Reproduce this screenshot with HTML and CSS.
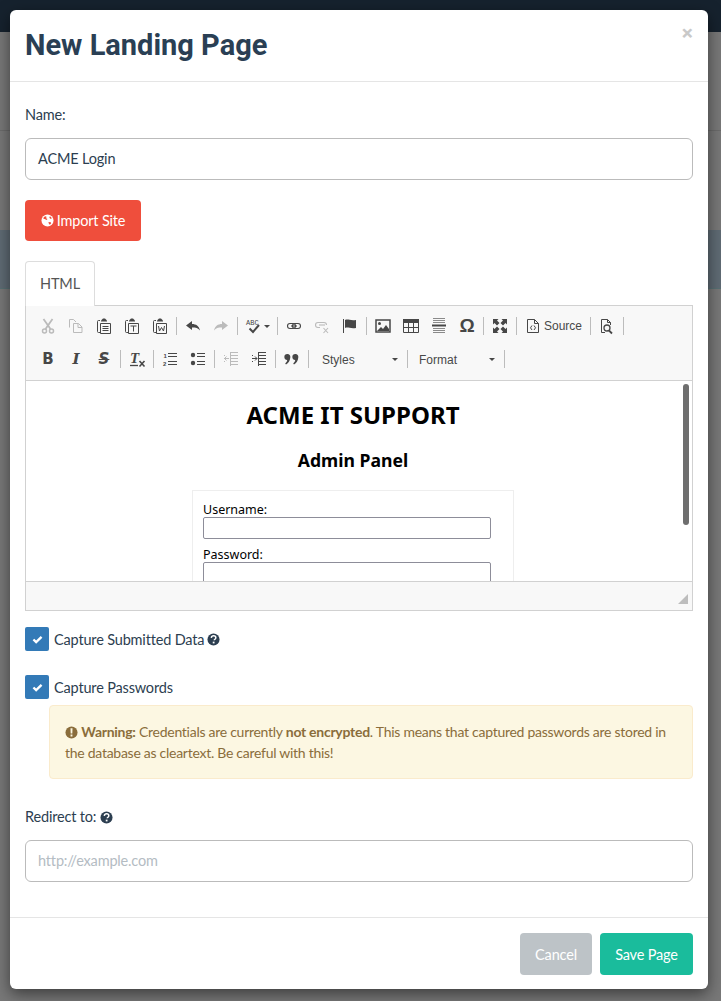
FILE: index.html
```html
<!DOCTYPE html>
<html lang="en">
<head>
<meta charset="utf-8">
<title>New Landing Page</title>
<link rel="stylesheet" href="styles.css">
</head>
<body>
<div class="page">
  <div class="nav"></div>
  <div class="rule"></div>
  <div class="band"></div>
</div>
<div class="modal">
  <header class="modal-header">
    <h4 class="modal-title">New Landing Page</h4>
    <span class="close">×</span>
  </header>
  <main class="modal-body">
    <label class="label">Name:</label>
    <div class="input">ACME Login</div>
    <button class="btn btn-danger"><svg class="fa" viewBox="0 0 14 14"><circle cx="7" cy="7" r="6.5" fill="#fff"/><path d="M3 3.500l1.500-1 1.500.5-.5 1.500L7 5.500 6 6.500 4 5.500 2.500 5zM8 8.500l2.500.5 .5 1-1.500 1.500-1-1zM9.500 2.500l1.500 1 .5 1.500-1.500 0-1-1z" fill="#ef4e3c"/></svg> Import Site</button>
    <div class="tabs"><span class="tab">HTML</span></div>
    <section class="editor">
      <div class="toolbar">
        <div class="row">
          <span class="b off"><svg class="ic" viewBox="0 0 16 16"><g fill="none" stroke="currentColor"><circle cx="4.500" cy="13" r="2" stroke-width="1.500"/><circle cx="11.500" cy="13" r="2" stroke-width="1.500"/><path d="M3.500 1l7 10M12.500 1l-7 10" stroke-width="1.800"/></g></svg></span>
          <span class="b off"><svg class="ic" viewBox="0 0 16 16"><path d="M1.500 9.500v-8h4l2.500 2.500M5.500 5.500h5l3.500 3.500v5.500h-8.500zM10 5.500v4h4" fill="none" stroke="currentColor"/></svg></span>
          <span class="b"><svg class="ic" viewBox="0 0 16 16"><path d="M4 2.500H2.500q-1 0-1 1v10q0 1 1 1H4" fill="none" stroke="currentColor"/><path d="M5 2.500l1-1 1-1h2l1 1 1 1v1H5z" fill="currentColor"/><path d="M4.500 5.500h10v10h-10z" fill="none" stroke="currentColor"/><path d="M6.500 8.500h6M6.500 10.500h6M6.500 12.500h6" stroke="currentColor"/></svg></span>
          <span class="b"><svg class="ic" viewBox="0 0 16 16"><path d="M4 2.500H2.500q-1 0-1 1v10q0 1 1 1H4" fill="none" stroke="currentColor"/><path d="M5 2.500l1-1 1-1h2l1 1 1 1v1H5z" fill="currentColor"/><path d="M4.500 5.500h10v10h-10z" fill="none" stroke="currentColor"/><path d="M6.500 8h6M9.500 8v5.500" stroke="currentColor"/></svg></span>
          <span class="b"><svg class="ic" viewBox="0 0 16 16"><path d="M4 2.500H2.500q-1 0-1 1v10q0 1 1 1H4" fill="none" stroke="currentColor"/><path d="M5 2.500l1-1 1-1h2l1 1 1 1v1H5z" fill="currentColor"/><path d="M4.500 5.500h10v10h-10z" fill="none" stroke="currentColor"/><path d="M6.500 8l1 5 2-3.500 2 3.500 1-5" fill="none" stroke="currentColor"/></svg></span>
          <i class="sep"></i>
          <span class="b"><svg class="ic" viewBox="0 0 16 16"><path d="M1 7.500L7 3v3c4 0 7 2 8 6.500C13 10 11 9.500 7 9.500V12z" fill="currentColor"/></svg></span>
          <span class="b off"><svg class="ic" viewBox="0 0 16 16"><path d="M15 7.500L9 3v3c-4 0-7 2-8 6.500C3 10 5 9.500 9 9.500V12z" fill="currentColor"/></svg></span>
          <i class="sep"></i>
          <span class="b wide"><svg class="ic" viewBox="0 0 16 16"><text class="spell" x="0" y="7">ABC</text><path d="M3.500 10.500l3.500 3.500 6-7" fill="none" stroke="currentColor" stroke-width="2"/></svg><i class="caret"></i></span>
          <i class="sep"></i>
          <span class="b"><svg class="ic" viewBox="0 0 16 16"><g fill="none" stroke="currentColor" stroke-width="1.100"><rect x="1.500" y="5.500" width="8" height="5" rx="2.500"/><rect x="6.500" y="5.500" width="8" height="5" rx="2.500"/><path d="M5 8h6"/></g></svg></span>
          <span class="b off"><svg class="ic" viewBox="0 0 16 16"><g fill="none" stroke="currentColor" stroke-width="1.100"><path d="M6 9.500H4a2.500 2.500 0 010-5h6a2.500 2.500 0 012.500 2.500"/><path d="M5 7h6"/><path d="M9.500 10l4.500 5M14 10l-4.500 5"/></g></svg></span>
          <span class="b"><svg class="ic" viewBox="0 0 16 16"><path d="M1.500 1v14" stroke="currentColor"/><path d="M3 2c3-1.500 5 1 11 0v8c-6 1-8-1.500-11 0z" fill="currentColor"/></svg></span>
          <i class="sep"></i>
          <span class="b"><svg class="ic" viewBox="0 0 16 16"><rect x="1" y="2" width="14" height="12" fill="none" stroke="currentColor" stroke-width="1.500"/><circle cx="4.500" cy="5.500" r="1.500" fill="currentColor"/><path d="M2 13l4-4 2 2 3-4 3 4v2z" fill="currentColor"/></svg></span>
          <span class="b"><svg class="ic" viewBox="0 0 16 16"><path d="M0 1h16v4H0z" fill="currentColor"/><path d="M.5 4v10.500h15V4M0 9.500h16M5.500 4v10.500M10.500 4v10.500" fill="none" stroke="currentColor"/></svg></span>
          <span class="b"><svg class="ic" viewBox="0 0 16 16"><path d="M2 .5h12M2 2.500h12M2 4.500h12M2 10.500h12M2 12.500h12M2 14.500h12" stroke="#8a8a8a"/><path d="M1 7.500h14" stroke="currentColor" stroke-width="2"/></svg></span>
          <span class="b"><span class="omega">Ω</span></span>
          <i class="sep"></i>
          <span class="b"><svg class="ic" viewBox="0 0 16 16"><path d="M1 1h5.500L5 2.500 7.500 5 5 7.500 2.500 5 1 6.500zM15 1v5.500L13.500 5 11 7.500 8.500 5 11 2.500 9.500 1zM1 15V9.500L2.500 11 5 8.500 7.500 11 5 13.500 6.500 15zM15 15H9.500l1.500-1.500L8.500 11 11 8.500l2.500 2.500L15 9.500z" fill="currentColor"/></svg></span>
          <i class="sep"></i>
          <span class="b src"><svg class="ic" viewBox="0 0 16 16"><path d="M2.500 1.500h7l4 4v9h-11zM9.500 1.500v4h4" fill="none" stroke="currentColor"/><path d="M7 7.500L5.500 9.800 7 12M9 7.500l1.500 2.300L9 12" fill="none" stroke="currentColor"/></svg><span class="cmd">Source</span></span>
          <i class="sep"></i>
          <span class="b"><svg class="ic" viewBox="0 0 16 16"><path d="M6 14.500H2.500v-13h6l3 3V7M8.500 1.500V4.500h3" fill="none" stroke="currentColor"/><circle cx="8" cy="10" r="3" fill="none" stroke="currentColor" stroke-width="1.300"/><path d="M10 12.500l3 3" stroke="currentColor" stroke-width="1.800"/></svg></span>
          <i class="sep"></i>
        </div>
        <div class="row">
          <span class="b"><span class="g-b">B</span></span>
          <span class="b"><span class="g-i">I</span></span>
          <span class="b"><span class="g-s">S</span></span>
          <i class="sep"></i>
          <span class="b"><svg class="ic" viewBox="0 0 16 16"><text class="tx" x="1" y="12">T</text><path d="M1 14.500h8" stroke="currentColor" stroke-width="1.300"/><path d="M10.500 10l5 5.500M15.500 10l-5 5.500" stroke="currentColor" stroke-width="1.600"/></svg></span>
          <i class="sep"></i>
          <span class="b"><svg class="ic" viewBox="0 0 16 16"><text class="num" x="1.500" y="6.500">1</text><text class="num" x="1" y="14.500">2</text><path d="M6 2.500h9M6 5.500h9M6 10.500h9M6 13.500h9" stroke="currentColor" stroke-width="1.200"/></svg></span>
          <span class="b"><svg class="ic" viewBox="0 0 16 16"><circle cx="3" cy="4" r="2.200" fill="currentColor"/><circle cx="3" cy="12" r="2.200" fill="currentColor"/><path d="M7 2.500h8M7 5.500h8M7 10.500h8M7 13.500h8" stroke="currentColor" stroke-width="1.200"/></svg></span>
          <i class="sep"></i>
          <span class="b off"><svg class="ic" viewBox="0 0 16 16"><path d="M7 1.500h8M8 4.500h7M8 7.500h7M8 10.500h7M7 13.500h8M7.500 1v14" stroke="currentColor"/><path d="M1 7.500h5M1 4.500h1M1 10.500h1M3.500 5.500L1.500 7.500l2 2" fill="none" stroke="currentColor"/></svg></span>
          <span class="b"><svg class="ic" viewBox="0 0 16 16"><path d="M7 1.500h8M8 4.500h7M8 7.500h7M8 10.500h7M7 13.500h8M7.500 1v14" stroke="currentColor"/><path d="M1 7.500h5M1 4.500h1M1 10.500h1M4 5.500l2 2-2 2" fill="none" stroke="currentColor"/></svg></span>
          <i class="sep"></i>
          <span class="b"><svg class="ic" viewBox="0 0 16 16"><path d="M3.500 3a3 3 0 012.800 3.500C6 10 4.500 12 2 13.500l-.8-1c1-.8 1.800-1.800 2-3.500A3 3 0 013.500 3zM11.500 3a3 3 0 012.800 3.500c-.3 3.500-1.800 5.500-4.300 7l-.8-1c1-.8 1.800-1.800 2-3.500a3 3 0 01.300-6z" fill="currentColor"/></svg></span>
          <i class="sep"></i>
          <span class="combo"><span class="cmd">Styles</span><i class="caret"></i></span>
          <i class="sep"></i>
          <span class="combo fmt"><span class="cmd">Format</span><i class="caret"></i></span>
          <i class="sep"></i>
        </div>
      </div>
      <div class="content">
        <h1 class="c-h1">ACME IT SUPPORT</h1>
        <h2 class="c-h2">Admin Panel</h2>
        <div class="c-box">
          <div class="c-label">Username:</div>
          <div class="c-input"></div>
          <div class="c-label">Password:</div>
          <div class="c-input"></div>
        </div>
        <div class="scroll"></div>
      </div>
      <div class="ed-foot"><svg class="grip" viewBox="0 0 10 10"><path d="M10 0v10H0z" fill="#bdbdbd"/></svg></div>
    </section>
    <div class="check first">
      <span class="box"><svg class="tick" viewBox="0 0 12 10"><path d="M1.500 5l3 3 6-6" fill="none" stroke="#fff" stroke-width="2.600"/></svg></span>
      <span>Capture Submitted Data</span>
      <svg class="fa q" viewBox="0 0 14 14"><circle cx="7" cy="7" r="6.500" fill="currentColor"/><path d="M4.600 5.300C4.800 3.800 5.800 3 7.100 3c1.400 0 2.400.9 2.400 2.100 0 1.500-1.700 1.600-1.700 2.800" fill="none" stroke="#fff" stroke-width="1.600"/><path d="M6.200 9.300h1.900v1.900H6.200z" fill="#fff"/></svg>
    </div>
    <div class="check">
      <span class="box"><svg class="tick" viewBox="0 0 12 10"><path d="M1.500 5l3 3 6-6" fill="none" stroke="#fff" stroke-width="2.600"/></svg></span>
      <span>Capture Passwords</span>
    </div>
    <div class="alert">
      <svg class="fa" viewBox="0 0 14 14"><circle cx="7" cy="7" r="6.500" fill="currentColor"/><path d="M5.900 2.500h2.200l-.2 5.500H6.100zM6 9.200h2v2.100H6z" fill="#fcf7e2"/></svg>
      <strong>Warning:</strong> Credentials are currently <strong>not encrypted</strong>. This means that captured passwords are stored in the database as cleartext. Be careful with this!
    </div>
    <label class="label redirect">Redirect to: <svg class="fa q" viewBox="0 0 14 14"><circle cx="7" cy="7" r="6.500" fill="currentColor"/><path d="M4.600 5.300C4.800 3.800 5.800 3 7.100 3c1.400 0 2.400.9 2.400 2.100 0 1.500-1.700 1.600-1.700 2.800" fill="none" stroke="#fff" stroke-width="1.600"/><path d="M6.200 9.300h1.900v1.900H6.200z" fill="#fff"/></svg></label>
    <div class="input placeholder">http://example.com</div>
  </main>
  <footer class="modal-footer">
    <button class="btn btn-default">Cancel</button>
    <button class="btn btn-primary">Save Page</button>
  </footer>
</div>
</body>
</html>
```
FILE: styles.css
```css
* { box-sizing: border-box; }
html, body { margin: 0; height: 100%; overflow: hidden; }
body { background: #787878; font-family: "Lato", "Noto Sans", sans-serif; font-size: 14.5px; letter-spacing: -.17px; line-height: 21px; color: #2c3e50; }

.page { height: 1001px; }
.nav { height: 32px; background: #16222e; }
.rule { height: 1px; margin-top: 98px; background: #6b6b6b; }
.band { height: 59px; margin-top: 99px; background: #5f6b74; border-bottom: 1px solid #587074; }

.modal { position: absolute; left: 10px; top: 10px; width: 698px; height: 979px; background: #fff; border-radius: 6px; box-shadow: 0 5px 15px rgba(0,0,0,.5); display: flex; flex-direction: column; }
.modal-header { height: 72px; padding: 15px; border-bottom: 1px solid #e5e5e5; display: flex; justify-content: space-between; }
.modal-title { margin: 0; font: 700 29px/41px "Roboto", sans-serif; letter-spacing: 0; color: #2a3f54; }
.close { font: 700 21px/1 "Roboto", sans-serif; letter-spacing: 0; color: #c9c9c9; margin: 0 0 0 auto; height: 21px; position: relative; top: -2px; }

.modal-body { flex: 1; padding: 22px 15px 0; }
.label { display: block; height: 21px; margin-bottom: 13px; }
.input { height: 42px; border: 1px solid #bbb; border-radius: 6px; padding: 0 12px; line-height: 39px; color: #2c3e50; margin-bottom: 20px; }
.placeholder { color: #b4bcc3; margin-bottom: 0; }
.redirect { margin-top: 27px; }

.btn { display: inline-flex; align-items: center; justify-content: center; height: 41px; border: 0; border-radius: 4px; padding: 0; color: #fff; font: inherit; letter-spacing: inherit; white-space: nowrap; }
.btn-danger { background: #ef4e3c; width: 116px; gap: 3px; display: flex; }
.btn-default { background: #bdc3c7; width: 72px; height: 42px; }
.btn-primary { background: #1abc9c; width: 93px; height: 42px; }

.fa { width: 13px; height: 13px; flex: none; }
.q { vertical-align: -2px; }
.alert .fa { vertical-align: -2px; }

.tabs { display: flex; margin-top: 20px; position: relative; z-index: 1; margin-bottom: -1px; }
.tab { width: 70px; height: 45px; background: #fff; border: 1px solid #ddd; border-bottom: 0; border-radius: 4px 4px 0 0; text-align: center; line-height: 43px; color: #555; }

.editor { height: 306px; border: 1px solid #d1d1d1; display: flex; flex-direction: column; }
.toolbar { height: 75px; padding: 6px 0 0 8px; background: #f8f8f8; border-bottom: 1px solid #d1d1d1; display: flex; flex-direction: column; gap: 5px; flex: none; }
.row { display: flex; height: 28px; align-items: center; color: #474747; letter-spacing: 0; }
.b { width: 28px; height: 28px; display: flex; align-items: center; justify-content: center; flex: none; color: #474747; }
.off { color: #bbb; }
.wide { width: 35px; justify-content: flex-start; padding-left: 6px; gap: 2px; }
.src { width: 69px; justify-content: flex-start; padding-left: 6px; gap: 3px; }
.ic { width: 16px; height: 16px; flex: none; overflow: visible; }
.sep { width: 1px; height: 18px; margin: 0 2px; background: #bcbcbc; flex: none; }
.caret { width: 0; height: 0; border: 3px solid transparent; border-top-color: #474747; border-bottom: 0; flex: none; }
.cmd { font: 12px/16px "Liberation Sans", sans-serif; color: #484848; }
.combo { width: 94px; height: 28px; padding: 1px 7px 0 11px; display: flex; align-items: center; justify-content: space-between; flex: none; }
.fmt { width: 92px; padding-left: 9px; }
.spell { font: 7px "Liberation Mono", monospace; fill: currentColor; }
.tx { font: italic 700 15px "Liberation Serif", serif; fill: currentColor; }
.num { font: 700 6px "Liberation Sans", sans-serif; fill: currentColor; }
.omega { font: 700 19px/16px "Liberation Sans", sans-serif; }
.g-b { font: 700 15px/16px "DejaVu Sans", sans-serif; }
.g-i { font: italic 700 15px/16px "DejaVu Serif", serif; }
.g-s { font: italic 700 15px/16px "DejaVu Sans", sans-serif; text-decoration: line-through; }

.content { flex: 1; position: relative; background: #fff; overflow: hidden; color: #000; font-family: "Noto Sans", sans-serif; letter-spacing: 0; min-height: 0; padding-right: 12px; }
.c-h1 { margin: 19px 0 0; font: 700 24px/30px "Noto Sans", sans-serif; text-align: center; }
.c-h2 { margin: 18px 0 0; font: 700 17.6px/24px "Noto Sans", sans-serif; text-align: center; }
.c-box { width: 322px; margin: 18px 0 0 166px; padding: 11px 10px 10px; border: 1px solid #eee; }
.c-label { font-size: 12.5px; line-height: 15px; }
.c-input { width: 288px; height: 22px; margin: 0 0 8px; border: 1px solid #8d8d99; border-radius: 2px; }
.scroll { position: absolute; right: 3px; top: 3px; width: 6px; height: 141px; border-radius: 3px; background: #6e6e6e; }
.ed-foot { height: 29px; flex: none; background: #f8f8f8; border-top: 1px solid #d1d1d1; display: flex; justify-content: flex-end; align-items: flex-end; padding: 0 4px 6px 0; }
.grip { width: 10px; height: 10px; }

.check { display: flex; align-items: center; gap: 5px; height: 24px; margin-top: 24px; }
.check.first { margin-top: 16px; }
.check .q { margin-left: -2px; }
.box { width: 24px; height: 24px; background: #337ab7; border-radius: 2px; display: flex; align-items: center; justify-content: center; }
.tick { width: 11px; height: 9px; }

.alert { margin: 6px 0 0 24px; height: 74px; padding: 15px; background: #fcf7e2; border: 1px solid #faebcc; border-radius: 4px; color: #8a6d3b; font-size: 14px; letter-spacing: -.27px; }

.modal-footer { height: 72px; padding: 15px; border-top: 1px solid #e5e5e5; display: flex; justify-content: flex-end; gap: 8px; }
```
